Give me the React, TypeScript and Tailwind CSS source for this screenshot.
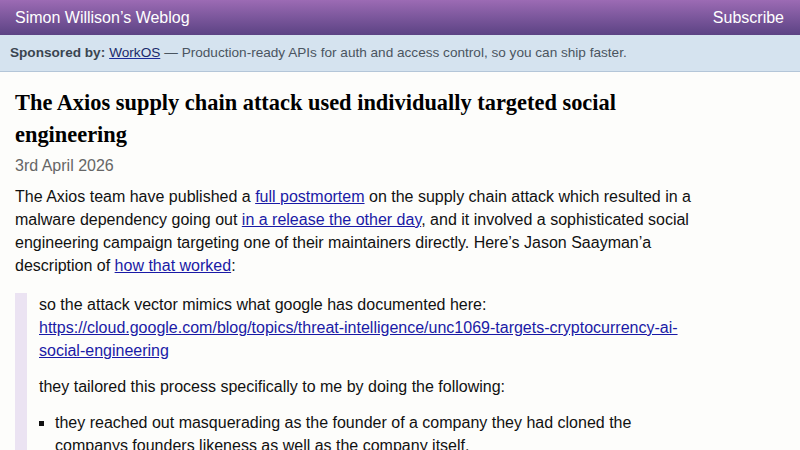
import React from "react";

const sans = { fontFamily: '"Liberation Sans", Arial, sans-serif' };

export default function App() {
  return (
    <div className="min-h-[450px] bg-[#fdfdfb] text-[#111]" style={sans}>
      <header className="h-[35px] flex items-center justify-between px-[15px] bg-gradient-to-b from-[#9c6bb4] to-[#5c4384] text-white text-[16px]">
        <span>Simon Willison’s Weblog</span>
        <span className="pr-[1px]">Subscribe</span>
      </header>
      <div className="h-[37px] flex items-center px-[10px] bg-[#d5e3ef] border-b border-[#b4c6d8] text-[13.6px] text-[#4a5560]">
        <span className="font-bold text-[#3a4550] mr-[4px]">Sponsored by:</span>
        <a className="underline text-[#1a2a6a] decoration-[#1a2a9a] mr-[4px]">WorkOS</a>
        <span>— Production-ready APIs for auth and access control, so you can ship faster.</span>
      </div>
      <main className="px-[15px] pt-[15px] w-[720px]">
        <h1 className="text-[22.4px] leading-[32px] font-bold text-[#000]" style={{ fontFamily: '"Liberation Serif", "Times New Roman", serif' }}>
          The Axios supply chain attack used individually targeted social engineering
        </h1>
        <p className="text-[16px] leading-[23px] text-[#666] mt-[3px]">3rd April 2026</p>
        <p className="text-[16px] leading-[23px] mt-[8px]">
          The Axios team have published a <a className="text-[#1a1aa6] underline">full postmortem</a> on the supply chain attack which resulted in a malware dependency going out <a className="text-[#1a1aa6] underline">in a release the other day</a>, and it involved a sophisticated social engineering campaign targeting one of their maintainers directly. Here’s Jason Saayman’a description of <a className="text-[#1a1aa6] underline">how that worked</a>:
        </p>
        <blockquote className="mt-[16px] w-[690px] border-l-[12px] border-[#ebe3f2] pl-[12px] text-[16px] leading-[23px]">
          <p>
            so the attack vector mimics what google has documented here:{" "}
            <a className="text-[#1a1aa6] underline">https://cloud.google.com/blog/topics/threat-intelligence/unc1069-targets-cryptocurrency-ai-social-engineering</a>
          </p>
          <p className="mt-[13px]">they tailored this process specifically to me by doing the following:</p>
          <ul className="mt-[13px] list-[square] pl-[16px]">
            <li>they reached out masquerading as the founder of a company they had cloned the companys founders likeness as well as the company itself.</li>
          </ul>
        </blockquote>
      </main>
    </div>
  );
}
